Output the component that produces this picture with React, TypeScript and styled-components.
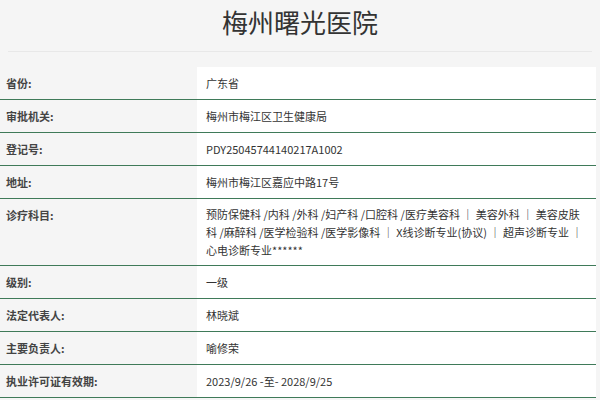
import React from "react";
import styled, { createGlobalStyle } from "styled-components";

const GlobalStyle = createGlobalStyle`
  body {
    margin: 0;
    background: #f5f5f5;
    font-family: "Noto Sans CJK SC", "Liberation Sans", sans-serif;
  }
`;

const Page = styled.div`
  width: 600px;
  height: 400px;
  overflow: hidden;
  background: #f5f5f5;
`;

const Title = styled.h1`
  margin: 0 8px;
  height: 51px;
  line-height: 44px;
  text-align: center;
  font-size: 26px;
  font-weight: 400;
  color: #333;
  border-bottom: 1px solid #e8e8e8;
`;

const Table = styled.div`
  margin: 15px 4px 0 0;
`;

const Row = styled.div`
  display: grid;
  grid-template-columns: 197px 1fr;
  border-bottom: 1px solid #3f7a59;
  font-size: 11px;
  color: #333;
`;

const Label = styled.div`
  padding: 7px 6px;
  line-height: 18px;
  font-weight: 700;
  color: #444;
`;

const Value = styled.div`
  background: #fff;
  padding: 6px 10px 6px 9px;
  line-height: 18px;
  display: flex;
  align-items: center;
`;

const rows: [string, string][] = [
  ["省份:", "广东省"],
  ["审批机关:", "梅州市梅江区卫生健康局"],
  ["登记号:", "PDY25045744140217A1002"],
  ["地址:", "梅州市梅江区嘉应中路17号"],
  [
    "诊疗科目:",
    "预防保健科 /内科 /外科 /妇产科 /口腔科 /医疗美容科 ｜ 美容外科 ｜ 美容皮肤科 /麻醉科 /医学检验科 /医学影像科 ｜ X线诊断专业(协议) ｜ 超声诊断专业 ｜ 心电诊断专业******",
  ],
  ["级别:", "一级"],
  ["法定代表人:", "林晓斌"],
  ["主要负责人:", "喻修荣"],
  ["执业许可证有效期:", "2023/9/26 -至- 2028/9/25"],
];

export default function App() {
  return (
    <Page>
      <GlobalStyle />
      <Title>梅州曙光医院</Title>
      <Table>
        {rows.map(([k, v]) => (
          <Row key={k}>
            <Label>{k}</Label>
            <Value>{v}</Value>
          </Row>
        ))}
      </Table>
    </Page>
  );
}
